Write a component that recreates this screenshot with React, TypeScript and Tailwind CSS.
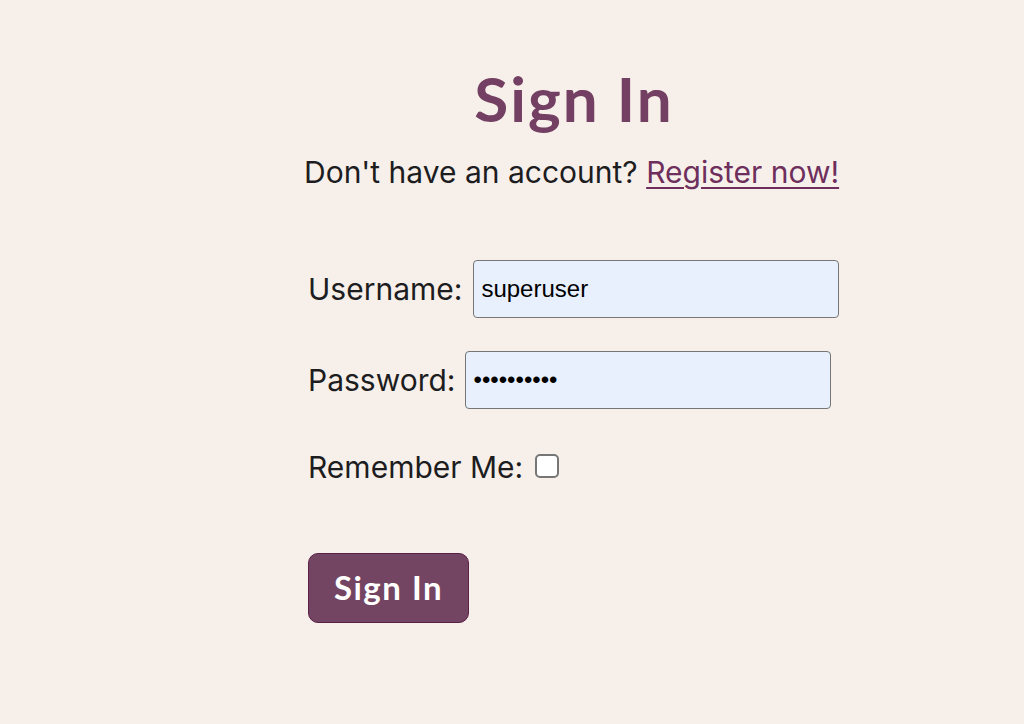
export default function App() {
  return (
    <div className="min-h-[724px] w-full bg-[#f7f0ea] font-['Inter','Noto_Sans',sans-serif] text-[#1d1d1f]">
      <div className="ml-[304px] w-[540px] pt-[62px]">
        <h1 className="text-center font-['Lato','Open_Sans',sans-serif] text-[62px] leading-[72px] font-bold tracking-[2px] text-[#733f62]">
          Sign In
        </h1>
        <p className="mt-[20px] whitespace-nowrap text-[30px] leading-[36px]">
          Don't have an account?{" "}
          <a href="#" className="text-[#6e2f5c] underline decoration-[2px] underline-offset-[4px]">
            Register now!
          </a>
        </p>

        <form className="mt-[70px] pl-[4px]" onSubmit={(e) => e.preventDefault()}>
          <div className="flex items-center gap-[11px]">
            <label className="text-[30px]">Username:</label>
            <input
              type="text"
              defaultValue="superuser"
              className="h-[58px] w-[366px] rounded-[4px] border border-[#767676] bg-[#e8f0fe] px-[7px] font-['Liberation_Sans',sans-serif] text-[24px] text-black"
            />
          </div>
          <div className="mt-[33px] flex items-center gap-[10px]">
            <label className="text-[30px]">Password:</label>
            <input
              type="password"
              defaultValue="superuser1"
              className="h-[58px] w-[366px] rounded-[4px] border border-[#767676] bg-[#e8f0fe] px-[7px] font-['Liberation_Sans',sans-serif] text-[24px] text-black"
            />
          </div>
          <div className="mt-[36px] flex items-center gap-[12px]">
            <label className="text-[30px]">Remember Me:</label>
            <input
              type="checkbox"
              className="-mt-[4px] h-[24px] w-[24px] appearance-none rounded-[5px] border-2 border-[#767676] bg-white"
            />
          </div>
          <button
            type="submit"
            className="mt-[63px] h-[70px] w-[161px] rounded-[10px] border border-[#5a2048] bg-[#734563] font-['Lato','Open_Sans',sans-serif] text-[33px] font-bold tracking-[1.5px] text-white"
          >
            Sign In
          </button>
        </form>
      </div>
    </div>
  );
}
